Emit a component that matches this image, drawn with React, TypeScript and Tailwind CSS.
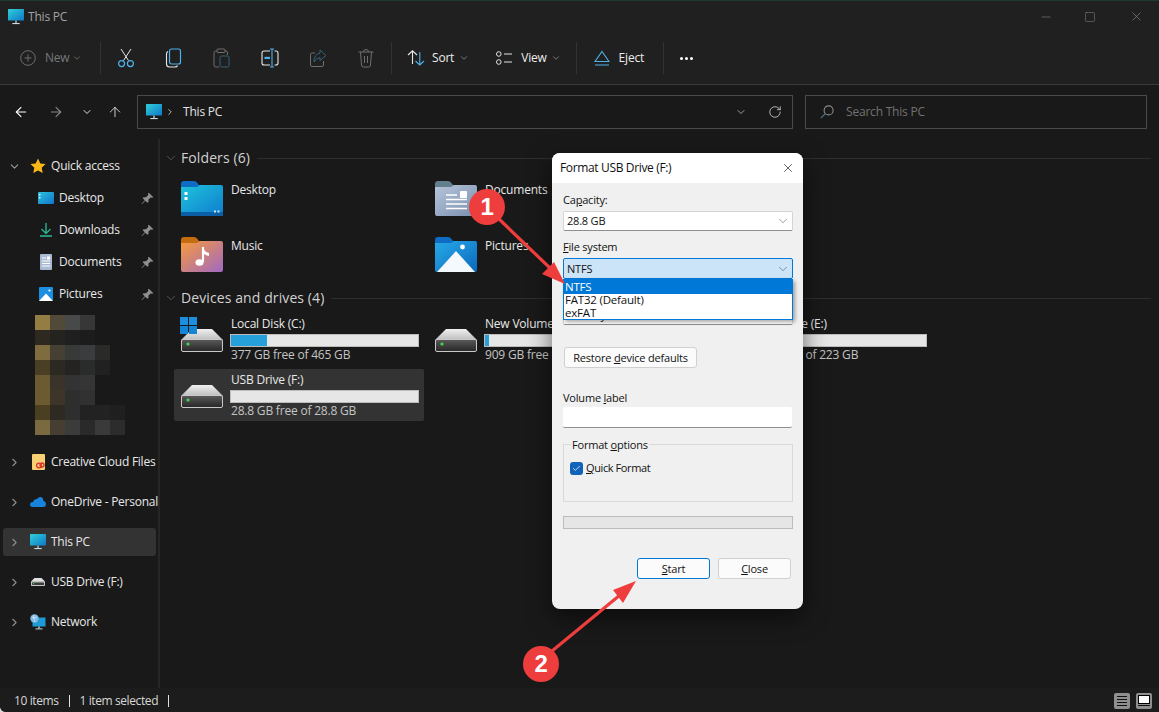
import React from "react";
import { ChevronDown, ChevronRight, ArrowLeft, ArrowRight, ArrowUp, RotateCw, X, Minus, Square, Check } from "lucide-react";

const PcIcon = ({ cls = "w-4 h-4" }: { cls?: string }) => (
  <svg viewBox="0 0 16 16" className={cls}>
    <defs>
      <linearGradient id="pcg" x1="0" y1="0" x2="1" y2="1">
        <stop offset="0" stopColor="#2fd0d8" />
        <stop offset="1" stopColor="#0f78c8" />
      </linearGradient>
    </defs>
    <rect x="0" y="0" width="16" height="11.5" rx="0.6" fill="url(#pcg)" />
    <rect x="7" y="11.5" width="2" height="2.6" fill="#7f98a6" />
    <rect x="4.3" y="14" width="7.4" height="1.1" fill="#cfd8dc" />
  </svg>
);

const FolderIcon = ({ id, tab, from, to, children }: { id: string; tab: string; from: string; to: string; children?: React.ReactNode }) => (
  <svg viewBox="0 0 42 35" className="w-[42px] h-[35px] shrink-0">
    <defs>
      <linearGradient id={id} x1="0" y1="0" x2="1" y2="1">
        <stop offset="0" stopColor={from} />
        <stop offset="1" stopColor={to} />
      </linearGradient>
    </defs>
    <path d="M0 3 Q0 0 3 0 H13 Q15 0 16 1.5 L18 4 H30 V12 H0 Z" fill={tab} />
    <path d="M0 6 H16 L19 4 H40 Q42 4 42 6 V33 Q42 35 40 35 H2 Q0 35 0 33 Z" fill={`url(#${id})`} />
    {children}
  </svg>
);

const DriveIcon = () => (
  <svg viewBox="0 0 42 23" className="w-[42px] h-[23px]">
    <defs>
      <linearGradient id="dtop" x1="0" y1="0" x2="0" y2="1">
        <stop offset="0" stopColor="#f0f0f0" />
        <stop offset="1" stopColor="#bdbdbd" />
      </linearGradient>
      <linearGradient id="dbot" x1="0" y1="0" x2="0" y2="1">
        <stop offset="0" stopColor="#5a5a5a" />
        <stop offset="1" stopColor="#262626" />
      </linearGradient>
    </defs>
    <path d="M11 0 H31 L42 11 H0 Z" fill="url(#dtop)" />
    <rect x="0.5" y="10.5" width="41" height="12" rx="1.5" fill="url(#dbot)" stroke="#c9c9c9" />
    <circle cx="7" cy="15" r="1.6" fill="#3ddc4a" />
  </svg>
);

const WinLogo = () => (
  <svg viewBox="0 0 17 17" className="w-[17px] h-[17px] absolute left-[-1px] top-[-12px]">
    <rect x="0" y="0" width="8" height="8" fill="#1e8fdc" />
    <rect x="9" y="0" width="8" height="8" fill="#1e8fdc" />
    <rect x="0" y="9" width="8" height="8" fill="#1484d4" />
    <rect x="9" y="9" width="8" height="8" fill="#1484d4" />
  </svg>
);

const Pin = () => (
  <svg viewBox="0 0 12 12" className="w-[13px] h-[13px]" fill="#8f8f8f">
    <path d="M7.2 0.6 L11.4 4.8 L10.3 5.4 L8.9 5 L6.9 7 L6.9 9.2 L5.9 10 L3.9 8 L1 11 L0.6 10.6 L3.5 7.6 L1.6 5.7 L2.4 4.8 L4.7 4.8 L6.7 2.8 L6.4 1.5 Z" />
  </svg>
);

const CutIcon = () => (
  <svg viewBox="0 0 18 20" className="w-[18px] h-5" fill="none">
    <path d="M4 1 L11.5 12.5 M14 1 L6.5 12.5" stroke="#e8e8e8" strokeWidth="1" />
    <circle cx="4.6" cy="15.6" r="3" stroke="#4db2ec" strokeWidth="1.2" />
    <circle cx="13.4" cy="15.6" r="3" stroke="#4db2ec" strokeWidth="1.2" />
  </svg>
);
const CopyIcon = () => (
  <svg viewBox="0 0 18 20" className="w-[18px] h-5" fill="none">
    <path d="M3 3.5 Q1.5 4 1.5 6 V16 Q1.5 19 4.5 19 H10 Q12 19 12.5 17.5" stroke="#e8e8e8" strokeWidth="1.1" />
    <rect x="4.5" y="1" width="11" height="15" rx="2" stroke="#4db2ec" strokeWidth="1.2" />
  </svg>
);
const PasteIcon = () => (
  <svg viewBox="0 0 18 20" className="w-[18px] h-5" fill="none" opacity="0.45">
    <path d="M4 3 H2.5 Q1 3 1 5 V17 Q1 19 3 19 H6 M12 3 H13 Q14.5 3 14.5 5 V7" stroke="#cfcfcf" strokeWidth="1" />
    <rect x="4" y="1" width="8" height="3.5" rx="1" stroke="#cfcfcf" strokeWidth="1" />
    <rect x="7" y="8" width="9" height="11" rx="1.5" stroke="#4db2ec" strokeWidth="1" />
  </svg>
);
const RenameIcon = () => (
  <svg viewBox="0 0 18 20" className="w-[18px] h-5" fill="none">
    <path d="M9 3 H3 Q1 3 1 5 V15 Q1 17 3 17 H9 M13.5 3 H15 Q17 3 17 5 V15 Q17 17 15 17 H13.5" stroke="#e8e8e8" strokeWidth="1.1" />
    <path d="M9 1 H13 M11 1 V19 M9 19 H13" stroke="#4db2ec" strokeWidth="1.1" />
    <rect x="3.5" y="8.8" width="5.5" height="2.2" fill="#4db2ec" />
  </svg>
);
const ShareIcon = () => (
  <svg viewBox="0 0 18 20" className="w-[18px] h-5" fill="none" opacity="0.45">
    <path d="M6 5 H3 Q1.5 5 1.5 6.5 V17 Q1.5 18.5 3 18.5 H13 Q14.5 18.5 14.5 17 V13" stroke="#cfcfcf" strokeWidth="1" />
    <path d="M11 2 L17 7.5 L11 12.5 V9.7 Q7 9.5 5 14 Q5 6 11 5.2 Z" stroke="#4db2ec" strokeWidth="1" />
  </svg>
);
const TrashIcon = () => (
  <svg viewBox="0 0 18 20" className="w-[18px] h-5" fill="none" stroke="#cfcfcf" strokeWidth="1" opacity="0.45">
    <path d="M1.5 4 H16.5 M6.5 4 Q6.5 1.5 9 1.5 Q11.5 1.5 11.5 4 M3.5 4 L4.5 17 Q4.6 19 6.5 19 H11.5 Q13.4 19 13.5 17 L14.5 4 M7.5 8 V15 M10.5 8 V15" />
  </svg>
);
const SortIcon = () => (
  <svg viewBox="0 0 18 16" className="w-[18px] h-4" fill="none" strokeWidth="1.1">
    <path d="M1 5 L5.5 0.8 L10 5 M5.5 1 V14" stroke="#e8e8e8" />
    <path d="M8.5 11 L12.8 15 L17 11 M12.8 15 V2" stroke="#4db2ec" />
  </svg>
);
const ViewIcon = () => (
  <svg viewBox="0 0 16 14" className="w-4 h-[14px]" fill="none" stroke="#e0e0e0" strokeWidth="1">
    <circle cx="2.8" cy="3" r="2.3" />
    <circle cx="2.8" cy="11" r="2.3" />
    <path d="M8 3 H16 M8 11 H16" />
  </svg>
);
const EjectIcon = () => (
  <svg viewBox="0 0 16 16" className="w-4 h-4" fill="none" stroke="#4db2ec" strokeWidth="1.1">
    <path d="M8 1.5 L15 11.5 H1 Z M1 15 H15" />
  </svg>
);
const SearchIcon = () => (
  <svg viewBox="0 0 14 14" className="w-[14px] h-[14px]" fill="none" strokeWidth="1.1">
    <circle cx="8.6" cy="5.4" r="4.5" stroke="#8a8a8a" />
    <path d="M5.3 8.7 L0.8 13.2" stroke="#4b7a96" />
  </svg>
);

const Sep = ({ cls }: { cls: string }) => <div className={`w-px h-8 bg-[#333333] shrink-0 ${cls}`} />;
const IconBtn = ({ children }: { children: React.ReactNode }) => (
  <div className="w-12 h-8 flex items-center justify-center shrink-0">{children}</div>
);

const blocks: string[][] = [
  ["bg-[#937d42]", "bg-[#514a38]", "bg-[#484a4a]", "bg-[#373737]", "", ""],
  ["bg-[#2e2920]", "bg-[#252320]", "bg-[#1f1f1f]", "bg-[#1c1c1c]", "", ""],
  ["bg-[#7e6c3e]", "bg-[#463f33]", "bg-[#383a3a]", "bg-[#3a3c3d]", "bg-[#2a2a28]", ""],
  ["bg-[#4a3e25]", "bg-[#2c2923]", "bg-[#242322]", "bg-[#2a2b2b]", "bg-[#212121]", ""],
  ["bg-[#6c5a30]", "bg-[#3a3329]", "bg-[#333333]", "bg-[#353535]", "", ""],
  ["bg-[#6c5a30]", "bg-[#3d3528]", "bg-[#2e2e2e]", "bg-[#313131]", "", ""],
  ["bg-[#4b3f22]", "bg-[#2e2a22]", "bg-[#2e2e2e]", "bg-[#222222]", "bg-[#222222]", "bg-[#1f1f1f]"],
  ["bg-[#7b6a3f]", "bg-[#463e31]", "bg-[#3b3b3b]", "bg-[#2a2a2a]", "bg-[#3a3a3a]", "bg-[#2c2c2c]"],
];

const QuickItem = ({ icon, label }: { icon: React.ReactNode; label: string }) => (
  <div className="h-8 flex items-center pl-[38px] pr-[4px]">
    <div className="w-4 h-4 flex items-center justify-center shrink-0">{icon}</div>
    <span className="ml-[5px] flex-1 text-[#e8e8e8]">{label}</span>
    <Pin />
  </div>
);

const TreeItem = ({ icon, label, active }: { icon: React.ReactNode; label: string; active?: boolean }) => (
  <div className="h-10 flex items-center pl-[3px] pr-[2px]">
    <div className={`h-7 flex-1 flex items-center rounded-[3px] min-w-0 ${active ? "bg-[#333333]" : ""}`}>
      <ChevronRight className="w-[13px] h-[13px] ml-[5px] text-[#8f8f8f] shrink-0" strokeWidth={2} />
      <div className="w-4 h-4 ml-[9px] flex items-center justify-center shrink-0">{icon}</div>
      <span className="ml-[5px] whitespace-nowrap text-[#e8e8e8] tracking-[-0.25px]">{label}</span>
    </div>
  </div>
);

const Header = ({ label }: { label: string }) => (
  <div className="h-5 flex items-center">
    <ChevronDown className="w-[14px] h-[14px] text-[#6e6e6e] shrink-0" strokeWidth={1.2} />
    <span className="ml-[3px] text-[14px] tracking-[0.1px] text-[#d2d2d2] whitespace-nowrap">{label}</span>
    <div className="flex-1 h-px bg-[#2e2e2e] ml-[7px]" />
  </div>
);

const FolderTile = ({ icon, label }: { icon: React.ReactNode; label: string }) => (
  <div className="h-[52px] flex items-start pt-[6px] pl-[7px]">
    {icon}
    <span className="ml-[8px] mt-[1px] text-[#e8e8e8]">{label}</span>
  </div>
);

const DriveTile = ({ name, free, pct, active, badge }: { name: string; free: string; pct: string; active?: boolean; badge?: boolean }) => (
  <div className={`h-[52px] flex items-center pl-[7px] pr-[5px] rounded-[2px] ${active ? "bg-[#333333]" : ""}`}>
    <div className="relative w-[42px] h-[23px] shrink-0 mt-[2px]">
      {badge && <WinLogo />}
      <DriveIcon />
    </div>
    <div className="ml-[7px] flex-1 flex flex-col">
      <div className="h-4 leading-4 pl-px whitespace-nowrap text-[#e8e8e8]">{name}</div>
      <div className="h-[13px] mt-[2px] bg-[#e6e6e6] border border-[#bcbcbc]">
        <div className={`h-full bg-[#26a0da] ${pct}`} />
      </div>
      <div className="h-4 leading-4 pl-px whitespace-nowrap text-[#c4c4c4]">{free}</div>
    </div>
  </div>
);

const Select = ({ value, cls = "h-5 bg-white border-[#d4d4d4] border-b-[#8f8f8f]" }: { value: string; cls?: string }) => (
  <div className={`flex items-center border rounded-[2px] pl-[3px] pr-[2px] mt-[3px] w-[230px] text-[#111111] ${cls}`}>
    <span className="flex-1">{value}</span>
    <ChevronDown className="w-[14px] h-[14px] text-[#555555]" strokeWidth={1} />
  </div>
);

export default function App() {
  return (
    <div className="relative w-[1159px] h-[712px] overflow-hidden bg-[#d8d8d8] text-[12px] leading-4 font-['Open_Sans','Liberation_Sans',sans-serif] tracking-[-0.2px]">
      <div className="w-full h-full flex flex-col bg-[#191919] rounded-bl-[6px] overflow-hidden">
        {/* title */}
        <div className="h-[32px] bg-[#202020] border-t border-[#1c3a30] flex items-center pl-2 shrink-0">
          <PcIcon />
          <span className="ml-[4px] text-[#a3a3a3]">This PC</span>
          <div className="flex-1" />
          <Minus className="w-[14px] h-[14px] text-[#8a8a8a] mr-[31px]" strokeWidth={1} />
          <Square className="w-[12px] h-[12px] text-[#8a8a8a] mr-[33px]" strokeWidth={1} />
          <X className="w-[15px] h-[15px] text-[#8a8a8a] mr-[15px]" strokeWidth={1} />
        </div>
        {/* toolbar */}
        <div className="h-[53px] bg-[#202020] border-b border-[#3a3a3a] flex items-center shrink-0">
          <div className="w-[100px] flex items-center pl-[20px] shrink-0">
            <svg viewBox="0 0 16 16" className="w-4 h-4" fill="none" stroke="#6d6d6d" strokeWidth="1">
              <circle cx="8" cy="8" r="7.3" />
              <path d="M8 4.5 V11.5 M4.5 8 H11.5" />
            </svg>
            <span className="ml-[9px] text-[#777777]">New</span>
            <ChevronDown className="w-[10px] h-[10px] ml-[3px] text-[#8a8a8a]" strokeWidth={1.5} />
          </div>
          <Sep cls="" />
          <div className="w-px shrink-0" />
          <IconBtn><CutIcon /></IconBtn>
          <IconBtn><CopyIcon /></IconBtn>
          <IconBtn><PasteIcon /></IconBtn>
          <IconBtn><RenameIcon /></IconBtn>
          <IconBtn><ShareIcon /></IconBtn>
          <IconBtn><TrashIcon /></IconBtn>
          <Sep cls="ml-[1px]" />
          <div className="ml-[15px] flex items-center shrink-0">
            <SortIcon />
            <span className="ml-[7px] text-[#ececec]">Sort</span>
            <ChevronDown className="w-[10px] h-[10px] ml-[5px] text-[#b0b0b0]" strokeWidth={1.5} />
          </div>
          <div className="ml-[27px] flex items-center shrink-0">
            <ViewIcon />
            <span className="ml-[9px] text-[#ececec]">View</span>
            <ChevronDown className="w-[10px] h-[10px] ml-[4px] text-[#b0b0b0]" strokeWidth={1.5} />
          </div>
          <Sep cls="ml-[15px]" />
          <div className="ml-[17px] flex items-center shrink-0">
            <EjectIcon />
            <span className="ml-[9px] text-[#ececec]">Eject</span>
          </div>
          <Sep cls="ml-[19px]" />
          <div className="ml-[16px] flex items-center gap-[2px]">
            <div className="w-[3px] h-[3px] rounded-full bg-white" />
            <div className="w-[3px] h-[3px] rounded-full bg-white" />
            <div className="w-[3px] h-[3px] rounded-full bg-white" />
          </div>
        </div>
        {/* nav */}
        <div className="h-[54px] flex items-center shrink-0">
          <ArrowLeft className="w-[16px] h-[16px] ml-[13px] text-white" strokeWidth={1.6} />
          <ArrowRight className="w-[16px] h-[16px] ml-[19px] text-[#8a8a8a]" strokeWidth={1.6} />
          <ChevronDown className="w-[12px] h-[12px] ml-[17px] text-[#e0e0e0]" strokeWidth={2} />
          <ArrowUp className="w-[16px] h-[16px] ml-[14px] text-[#e8e8e8]" strokeWidth={1.3} />
          <div className="ml-[14px] w-[656px] h-[34px] border border-[#4a4a4a] flex items-center pl-[8px]">
            <PcIcon />
            <ChevronRight className="w-[10px] h-[10px] ml-[3px] text-[#d0d0d0]" strokeWidth={2} />
            <span className="ml-[8px] text-[#e4e4e4]">This PC</span>
            <div className="flex-1" />
            <ChevronDown className="w-[12px] h-[12px] text-[#c8c8c8] mr-[21px]" strokeWidth={1.5} />
            <RotateCw className="w-[14px] h-[14px] text-[#dcdcdc] mr-[10px]" strokeWidth={1.3} />
          </div>
          <div className="ml-[12px] w-[342px] h-[34px] border border-[#4a4a4a] flex items-center pl-[14px]">
            <SearchIcon />
            <span className="ml-[12px] text-[#727272]">Search This PC</span>
          </div>
        </div>
        {/* body */}
        <div className="flex-1 flex min-h-0">
          <div className="w-[158px] shrink-0 pt-[11px] overflow-hidden">
            <div className="h-8 flex items-center pl-[8px]">
              <ChevronDown className="w-[13px] h-[13px] text-[#9a9a9a]" strokeWidth={2} />
              <svg viewBox="0 0 16 16" className="w-4 h-4 ml-[9px]">
                <path d="M8 0.6 L10.3 5.4 L15.5 6.1 L11.7 9.7 L12.7 15 L8 12.4 L3.3 15 L4.3 9.7 L0.5 6.1 L5.7 5.4 Z" fill="#f9b81a" />
              </svg>
              <span className="ml-[5px] text-[#e8e8e8]">Quick access</span>
            </div>
            <QuickItem label="Desktop" icon={
              <svg viewBox="0 0 16 12" className="w-4 h-3"><defs><linearGradient id="sdk" x1="0" y1="0" x2="1" y2="1"><stop offset="0" stopColor="#2dc3dc" /><stop offset="1" stopColor="#0f74cc" /></linearGradient></defs><rect width="16" height="12" rx="1" fill="url(#sdk)" /><rect x="1" y="2" width="1.4" height="1.4" fill="#fff" /><rect x="1" y="5" width="1.4" height="1.4" fill="#fff" /></svg>
            } />
            <QuickItem label="Downloads" icon={
              <svg viewBox="0 0 14 14" className="w-[14px] h-[14px]" fill="none" stroke="#26b38f" strokeWidth="1.4"><path d="M7 0 V10 M2.5 6 L7 10.4 L11.5 6" /><path d="M1 13 H13" strokeWidth="1.6" /></svg>
            } />
            <QuickItem label="Documents" icon={
              <svg viewBox="0 0 12 16" className="w-3 h-4"><rect width="12" height="16" rx="1" fill="#a9bad2" /><path d="M2 4 H6 M2 7 H10 M2 9.5 H10 M2 12 H10" stroke="#fff" strokeWidth="1" /><rect x="7" y="2.5" width="3" height="3" fill="#fff" /></svg>
            } />
            <QuickItem label="Pictures" icon={
              <svg viewBox="0 0 14 14" className="w-[14px] h-[14px]"><rect width="14" height="14" rx="1" fill="#1d8fe0" /><path d="M0 14 L7 6.5 L14 14 Z" fill="#fff" /><circle cx="10.5" cy="3.5" r="1.1" fill="#fff" /></svg>
            } />
            <div className="mt-[5px] ml-[35px] flex flex-col">
              {blocks.map((row, i) => (
                <div key={i} className="flex h-[15px]">
                  {row.map((c, j) => <div key={j} className={`w-[15px] h-[15px] ${c}`} />)}
                </div>
              ))}
            </div>
            <div className="mt-[7px]">
              <TreeItem label="Creative Cloud Files" icon={
                <svg viewBox="0 0 13 16" className="w-[13px] h-4"><rect width="13" height="16" rx="1" fill="#f8cf73" /><circle cx="7" cy="11.5" r="2.4" fill="none" stroke="#d9322b" strokeWidth="1.3" /><circle cx="10" cy="11" r="2" fill="none" stroke="#d9322b" strokeWidth="1.3" /></svg>
              } />
              <TreeItem label="OneDrive - Personal" icon={
                <svg viewBox="0 0 16 10" className="w-4 h-[10px]"><path d="M3 10 Q0 10 0 7.5 Q0 5 3 5 Q4 2 7 2 Q8.5 0 10.5 0 Q13 0 13.5 4 Q16 4.5 16 7 Q16 10 13 10 Z" fill="#1683dc" /></svg>
              } />
              <TreeItem label="This PC" active icon={<PcIcon />} />
              <TreeItem label="USB Drive (F:)" icon={
                <svg viewBox="0 0 16 9" className="w-[14px] h-[8px]"><path d="M4 0 H12 L16 4 H0 Z" fill="#e0e0e0" /><rect y="3.5" width="16" height="5.5" rx="1" fill="#d4d4d4" /><rect x="1" y="5" width="14" height="3" fill="#3c3c3c" /><circle cx="3" cy="6.5" r="0.8" fill="#3ddc4a" /></svg>
              } />
              <TreeItem label="Network" icon={
                <svg viewBox="0 0 16 16" className="w-4 h-4"><rect x="2.5" y="3.5" width="13" height="9" fill="#1e9ad6" /><rect x="8" y="12.5" width="2" height="1.8" fill="#8aa" /><rect x="5.5" y="14.4" width="7" height="1" fill="#cfd8dc" /><circle cx="4.5" cy="4.5" r="4.2" fill="#7fb9e6" /><path d="M2 3 Q4 5 7 3 M4 1 Q3 5 5 8" stroke="#e8f2fa" strokeWidth="0.7" fill="none" /></svg>
              } />
            </div>
          </div>
          <div className="w-[2px] bg-[#262626] shrink-0" />
          {/* main */}
          <div className="flex-1 pt-[9px] pr-[8px] pl-[4px] overflow-hidden">
            <Header label="Folders (6)" />
            <div className="grid grid-cols-[250px_250px_250px] gap-1 ml-[10px] mt-[7px]">
              <FolderTile label="Desktop" icon={
                <FolderIcon id="fd1" tab="#0f6cc4" from="#1fc3da" to="#0e7ccf">
                  <rect x="0" y="31" width="42" height="4" fill="#0a5fa6" />
                  <rect x="3.5" y="11" width="3" height="3" fill="#fff" />
                  <rect x="3.5" y="16" width="3" height="3" fill="#fff" />
                  <rect x="33" y="29.5" width="2" height="2" fill="#d0e8f5" />
                  <rect x="36.5" y="29.5" width="2" height="2" fill="#d0e8f5" />
                </FolderIcon>
              } />
              <FolderTile label="Documents" icon={
                <FolderIcon id="fd2" tab="#617f8c" from="#b5c5da" to="#7b8fae">
                  <path d="M11 14 H22 M11 18.5 H32 M11 23 H32 M11 27.5 H32" stroke="#fff" strokeWidth="1.6" />
                  <rect x="25" y="10" width="7" height="7" rx="0.8" fill="#fff" />
                </FolderIcon>
              } />
              <FolderTile label="Downloads" icon={
                <FolderIcon id="fd3" tab="#0f8a70" from="#23c4a0" to="#0e8a75" />
              } />
              <FolderTile label="Music" icon={
                <FolderIcon id="fd4" tab="#c46c10" from="#f89a3a" to="#a069c4">
                  <path d="M22 10 V25" stroke="#fff" strokeWidth="2.2" />
                  <ellipse cx="18.5" cy="25.5" rx="4" ry="3.3" fill="#fff" />
                  <path d="M22 10 Q23 15 28 16 V19 Q23 18 22 15 Z" fill="#fff" />
                </FolderIcon>
              } />
              <FolderTile label="Pictures" icon={
                <FolderIcon id="fd5" tab="#0f6cc4" from="#27aae8" to="#0b69bd">
                  <path d="M2 35 L21 14 L40 35 Z" fill="#f4f9fd" />
                  <circle cx="27.5" cy="10" r="2.4" fill="#fff" />
                </FolderIcon>
              } />
              <FolderTile label="Videos" icon={
                <FolderIcon id="fd6" tab="#6a3fb0" from="#8f5bd6" to="#5a34a8" />
              } />
            </div>
            <div className="mt-[5px]">
              <Header label="Devices and drives (4)" />
            </div>
            <div className="grid grid-cols-[250px_250px_250px] gap-1 ml-[10px] mt-[5px]">
              <DriveTile badge name="Local Disk (C:)" free="377 GB free of 465 GB" pct="w-[19%]" />
              <DriveTile name="New Volume (D:)" free="909 GB free of 931 GB" pct="w-[2%]" />
              <DriveTile name="New Volume (E:)" free="171 GB free of 223 GB" pct="w-[1%]" />
              <DriveTile active name="USB Drive (F:)" free="28.8 GB free of 28.8 GB" pct="w-0" />
            </div>
          </div>
        </div>
        {/* status */}
        <div className="h-6 bg-[#1c1c1c] flex items-center pl-[14px] pt-[2px] shrink-0 tracking-[-0.4px]">
          <span className="text-[#d8d8d8]">10 items</span>
          <div className="w-px h-[12px] bg-[#e0e0e0] ml-[10px]" />
          <span className="ml-[10px] text-[#d8d8d8]">1 item selected</span>
          <div className="w-px h-[12px] bg-[#e0e0e0] ml-[10px]" />
          <div className="flex-1" />
          <div className="w-4 h-4 rounded-[2px] bg-[#8f8f8f] flex flex-col justify-center gap-[2px] px-[3px]">
            <div className="h-px bg-[#111111]" />
            <div className="h-px bg-[#111111]" />
            <div className="h-px bg-[#111111]" />
            <div className="h-px bg-[#111111]" />
          </div>
          <div className="w-4 h-4 rounded-[2px] bg-[#8f8f8f] ml-[6px] mr-[7px] p-[2px] flex flex-col">
            <div className="h-[9px] bg-white border border-black" />
            <div className="h-px mt-[1px] bg-[#111111]" />
          </div>
        </div>
      </div>

      {/* dialog */}
      <div className="absolute left-[552px] top-[153px] w-[251px] h-[456px] rounded-[8px] shadow-[0_8px_24px_rgba(0,0,0,0.55)] bg-[#f0f0f0] flex flex-col text-[#111111] text-[11px]">
        <div className="h-[30px] bg-white rounded-t-[8px] flex items-center pl-[8px] pr-[8px] shrink-0 text-[12px] tracking-[-0.35px]">
          <span className="flex-1">Format USB Drive (F:)</span>
          <X className="w-[14px] h-[14px] text-[#222222]" strokeWidth={1.2} />
        </div>
        <div className="flex-1 pl-[11px] pt-[9px] flex flex-col">
          <div className="h-4">Ca<span className="underline">p</span>acity:</div>
          <Select value="28.8 GB" />
          <div className="h-4 mt-[8px]"><span className="underline">F</span>ile system</div>
          <div className="relative">
            <Select value="NTFS" cls="h-[21px] bg-[#cce4f7] border-[#0078d7]" />
            <div className="absolute left-0 top-[24px] w-[230px] h-[41px] bg-white border border-[#0078d7] z-10 shadow-[2px_2px_4px_rgba(0,0,0,0.35)] leading-[13px] text-[11.5px] text-[#111111]">
              <div className="bg-[#0078d7] text-white h-[14px] pl-px">NTFS</div>
              <div className="h-[13px] leading-[11px] pl-px">FAT32 (Default)</div>
              <div className="h-[12px] leading-[11px] pl-px">exFAT</div>
            </div>
          </div>
          <div className="h-4 mt-[7px]"><span className="underline">A</span>llocation unit size</div>
          <Select value="4096 bytes" />
          <div className="mt-[22px] ml-px w-[133px] h-[21px] bg-[#fbfbfb] border border-[#d0d0d0] rounded-[3px] flex items-center justify-center">
            <span>Restore <span className="underline">d</span>evice defaults</span>
          </div>
          <div className="h-4 mt-[22px]">Volume <span className="underline">l</span>abel</div>
          <div className="mt-px w-[229px] h-[21px] bg-white border-b border-[#8f8f8f] rounded-[2px]" />
          <div className="relative mt-[16px] w-[230px] h-[58px] border border-[#d9d9d9]">
            <div className="absolute left-[7px] top-[-8px] bg-[#f0f0f0] px-px">Format <span className="underline">o</span>ptions</div>
            <div className="mt-[15px] ml-[6px] flex items-center">
              <div className="w-[13px] h-[13px] rounded-[3px] bg-[#0f63b8] flex items-center justify-center">
                <Check className="w-[9px] h-[9px] text-white" strokeWidth={2} />
              </div>
              <span className="ml-[3px] tracking-[-0.4px]"><span className="underline">Q</span>uick Format</span>
            </div>
          </div>
          <div className="mt-[14px] w-[230px] h-[13px] bg-[#e6e6e6] border border-[#bcbcbc]" />
          <div className="mt-[29px] flex gap-[8px] ml-[74px]">
            <div className="w-[73px] h-[21px] bg-[#fbfbfb] border border-[#0078d7] rounded-[3px] flex items-center justify-center">
              <span><span className="underline">S</span>tart</span>
            </div>
            <div className="w-[73px] h-[21px] bg-[#fbfbfb] border border-[#d0d0d0] rounded-[3px] flex items-center justify-center">
              <span><span className="underline">C</span>lose</span>
            </div>
          </div>
        </div>
      </div>

      {/* annotation arrows */}
      <svg viewBox="0 0 1159 712" className="absolute left-0 top-0 w-[1159px] h-[712px] pointer-events-none z-20">
        <path d="M499 219 L552 270" stroke="#ee3d3d" strokeWidth="3.2" fill="none" />
        <path d="M565 284 L542 274 L554 262 Z" fill="#ee3d3d" />
        <path d="M552 651 L620 595" stroke="#ee3d3d" strokeWidth="3.2" fill="none" />
        <path d="M636 581 L613 590 L623 603 Z" fill="#ee3d3d" />
      </svg>
      <div className="absolute left-[469px] top-[189px] w-9 h-9 rounded-full bg-[#ee3d3d] z-20 flex items-center justify-center text-white text-[24px] font-bold font-['Liberation_Sans',sans-serif]">1</div>
      <div className="absolute left-[523px] top-[646px] w-9 h-9 rounded-full bg-[#ee3d3d] z-20 flex items-center justify-center text-white text-[24px] font-bold font-['Liberation_Sans',sans-serif]">2</div>
    </div>
  );
}
